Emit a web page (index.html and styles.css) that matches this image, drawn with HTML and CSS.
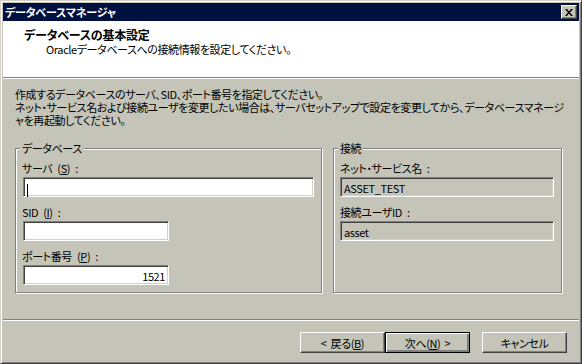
FILE: index.html
```html
<!DOCTYPE html>
<html lang="ja">
<head>
  <meta charset="UTF-8">
  <meta name="viewport" content="width=device-width, initial-scale=1.0">
  <title>データベースマネージャ</title>
  <link rel="stylesheet" href="styles.css">
</head>
<body>
  <div class="window">
    <!-- タイトルバー -->
    <div class="titlebar">
      <span class="title">データベースマネージャ</span>
      <span class="close">
        <svg width="8" height="7" viewBox="0 0 8 7"><path d="M0 0h2l2 2.5L6 0h2L5 3.5 8 7H6L4 4.5 2 7H0l3-3.5z" fill="#000"/></svg>
      </span>
    </div>

    <!-- ヘッダー -->
    <div class="header">
      <div class="header-title">データベースの基本設定</div>
      <div class="header-sub">Oracleデータベースへの接続情報を設定してください。</div>
    </div>
    <div class="rule"></div>

    <div class="content">
      <p class="intro">
        <span>作成するデータベースのサーバ、SID、ポート番号を指定してください。</span>
        <span>ネット・サービス名および接続ユーザを変更したい場合は、サーバセットアップで設定を変更してから、データベースマネージ</span>
        <span>ャを再起動してください。</span>
      </p>

      <div class="groups">
        <fieldset class="group">
          <legend>データベース</legend>
          <div class="label">サーバ (<u>S</u>) :</div>
          <div class="field wide"><span class="caret"></span></div>
          <div class="label">SID (<u>I</u>) :</div>
          <div class="field short"></div>
          <div class="label">ポート番号 (<u>P</u>) :</div>
          <div class="field short number">1521</div>
        </fieldset>

        <fieldset class="group">
          <legend>接続</legend>
          <div class="label">ネット・サービス名 :</div>
          <div class="field readonly">ASSET_TEST</div>
          <div class="label">接続ユーザID :</div>
          <div class="field readonly">asset</div>
        </fieldset>
      </div>
    </div>
    <div class="rule"></div>

    <div class="footer">
      <button class="btn">&lt; 戻る(<u>B</u>)</button>
      <button class="btn default">次へ(<u>N</u>) &gt;</button>
      <button class="btn cancel">キャンセル</button>
    </div>
  </div>
</body>
</html>
```

FILE: styles.css
```css
body {
  margin: 0;
  padding: 0;
  font-family: "Noto Sans CJK JP", "Noto Sans", sans-serif;
  font-size: 11px;
  letter-spacing: -0.4px;
  font-feature-settings: "palt";
  color: #000;
}
.window {
  width: 582px;
  height: 364px;
  box-sizing: border-box;
  display: flex;
  flex-direction: column;
  background-color: #c4c4b8;
  border: 1px solid;
  border-color: #d4d0c8 #404040 #404040 #d4d0c8;
  box-shadow: inset 1px 1px #fff, inset -1px -1px #808080;
  padding: 2px;
}
.titlebar {
  height: 18px;
  display: flex;
  align-items: center;
  justify-content: space-between;
  background-color: #00103f;
  padding: 0 2px;
}
.title {
  color: #fff;
  font-weight: bold;
  font-size: 11px;
  letter-spacing: -0.2px;
  line-height: 14px;
}
.close {
  width: 16px;
  height: 14px;
  box-sizing: border-box;
  display: flex;
  align-items: center;
  justify-content: center;
  background-color: #c4c4b8;
  border: 1px solid;
  border-color: #fff #404040 #404040 #fff;
  box-shadow: inset -1px -1px #808080;
}
.header {
  height: 56px;
  box-sizing: border-box;
  background-color: #fff;
  padding: 7px 0 0 21px;
  line-height: 14px;
}
.header-title {
  font-weight: bold;
  font-size: 12px;
  letter-spacing: -0.2px;
}
.header-sub {
  padding-left: 22px;
}
.rule {
  border-top: 1px solid #808080;
  border-bottom: 1px solid #fff;
}
.content {
  flex: 1;
  padding: 9px 12px 0 12px;
}
.intro {
  margin: 0;
  line-height: 13px;
}
.intro span {
  display: block;
  white-space: nowrap;
}
.groups {
  display: grid;
  grid-template-columns: 307px 229px;
  column-gap: 11px;
  margin-top: 14px;
}
.group {
  margin: 0;
  padding: 6px 7px 7px 6px;
  border: 1px solid #808080;
  box-shadow: inset 1px 1px #fff, 1px 1px #fff;
}
.group legend {
  padding: 0 2px;
  margin-left: -2px;
  line-height: 14px;
  background-color: #c4c4b8;
}
.label {
  line-height: 14px;
  margin-bottom: 2px;
  word-spacing: 3px;
}
.field {
  height: 20px;
  box-sizing: border-box;
  margin-bottom: 8px;
  padding: 2px 3px;
  line-height: 16px;
  background-color: #fff;
  border: 1px solid;
  border-color: #808080 #fff #fff #808080;
  box-shadow: inset 1px 1px #404040, inset -1px -1px #d4d0c8;
  white-space: nowrap;
}
.field:last-child {
  margin-bottom: 0;
}
.field.wide {
  margin-left: 1px;
}
.field.short {
  width: 146px;
  margin-left: 1px;
}
.field.number {
  text-align: right;
}
.field.readonly {
  background-color: #c4c4b8;
}
.caret {
  display: inline-block;
  width: 1px;
  height: 13px;
  vertical-align: middle;
  background-color: #000;
}
.footer {
  height: 40px;
  box-sizing: border-box;
  display: flex;
  justify-content: flex-end;
  align-items: flex-start;
  padding: 11px 12px 0 0;
}
.btn {
  width: 85px;
  height: 21px;
  box-sizing: border-box;
  font-family: inherit;
  font-size: 11px;
  letter-spacing: -0.4px;
  word-spacing: 2px;
  font-feature-settings: "palt";
  line-height: 14px;
  padding: 0;
  color: #000;
  background-color: #c4c4b8;
  border: 1px solid;
  border-color: #fff #404040 #404040 #fff;
  box-shadow: inset -1px -1px #808080;
}
.btn.default {
  border-color: #000;
  box-shadow: inset 1px 1px #fff, inset -2px -2px #808080, inset -1px -1px #404040;
}
.btn.cancel {
  margin-left: 12px;
}
```
